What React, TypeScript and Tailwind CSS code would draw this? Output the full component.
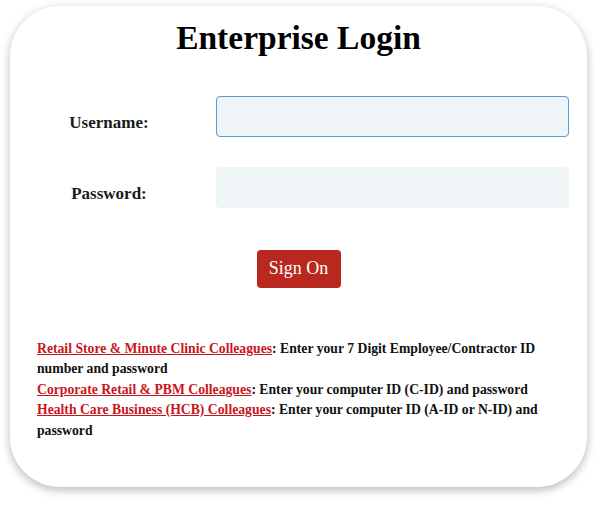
import { useState } from "react";

const serif = { fontFamily: '"Liberation Serif", "Times New Roman", serif' };

export default function App() {
    const [username, setUsername] = useState("");
    const [password, setPassword] = useState("");

    return (
        <div className="w-[600px] h-[505px] bg-white pt-[6px] pl-[10px]" style={serif}>
            <div className="w-[577px] h-[481px] bg-white rounded-[50px] shadow-[0_3px_10px_rgba(0,0,0,0.28)] pt-[15px]">
                <h1 className="text-center text-[33.5px] leading-none font-bold text-black">Enterprise Login</h1>

                {/* Form */}
                <div className="mt-[41px] pl-[28px] pr-[18px] flex flex-col gap-[30px]">
                    <div className="flex items-start">
                        <label className="w-[142px] mt-[18px] text-center text-[17px] leading-none font-bold text-[#1a1a1a]">Username:</label>
                        <input
                            type="text"
                            value={username}
                            onChange={(e) => setUsername(e.target.value)}
                            className="ml-[36px] flex-1 h-[41px] px-2 bg-[#eff4f7] border border-[#5b9bd5] rounded-[4px] outline-none"
                        />
                    </div>
                    <div className="flex items-start">
                        <label className="w-[142px] mt-[18px] text-center text-[17px] leading-none font-bold text-[#1a1a1a]">Password:</label>
                        <input
                            type="password"
                            value={password}
                            onChange={(e) => setPassword(e.target.value)}
                            className="ml-[36px] flex-1 h-[41px] px-2 bg-[#eff4f7] border border-[#eff4f7] rounded-[4px] outline-none"
                        />
                    </div>
                </div>

                <div className="mt-[42px] flex justify-center">
                    <button className="w-[84px] h-[38px] bg-[#b8281e] text-white text-[18px] rounded-[4px]">Sign On</button>
                </div>

                {/* Help text */}
                <div className="mt-[51px] pl-[27px] pr-[18px] text-[13.7px] leading-[20.5px] font-bold text-[#111]">
                    <div>
                        <a href="#" className="text-[#c8161d] underline">Retail Store &amp; Minute Clinic Colleagues</a>: Enter your 7 Digit Employee/Contractor ID number and password
                    </div>
                    <div>
                        <a href="#" className="text-[#c8161d] underline">Corporate Retail &amp; PBM Colleagues</a>: Enter your computer ID (C-ID) and password
                    </div>
                    <div>
                        <a href="#" className="text-[#c8161d] underline">Health Care Business (HCB) Colleagues</a>: Enter your computer ID (A-ID or N-ID) and password
                    </div>
                </div>
            </div>
        </div>
    );
}
